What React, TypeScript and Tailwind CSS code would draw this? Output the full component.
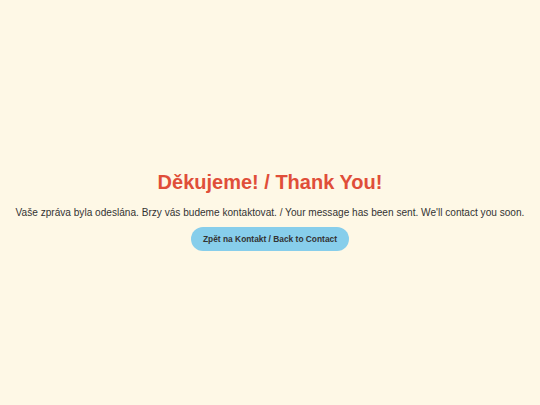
import React from 'react';

const App: React.FC = () => {
    return (
        <div className="min-h-screen bg-[#fef8e6] flex flex-col items-center justify-center text-center font-['Liberation_Sans',Arial,sans-serif] pt-[16px]">
            <h1 className="text-[20px] font-bold text-[#e04e39] mb-[10px] leading-tight">
                Děkujeme! / Thank You!
            </h1>
            <p className="text-[10.1px] text-[#333] mb-[7px] whitespace-nowrap">
                Vaše zpráva byla odeslána. Brzy vás budeme kontaktovat. / Your message has been sent. We'll contact you soon.
            </p>
            <a
                href="#"
                className="inline-block bg-[#87ceeb] text-[#333] text-[8.4px] font-bold rounded-full px-[12px] py-[5.5px]"
            >
                Zpět na Kontakt / Back to Contact
            </a>
        </div>
    );
};

export default App;
